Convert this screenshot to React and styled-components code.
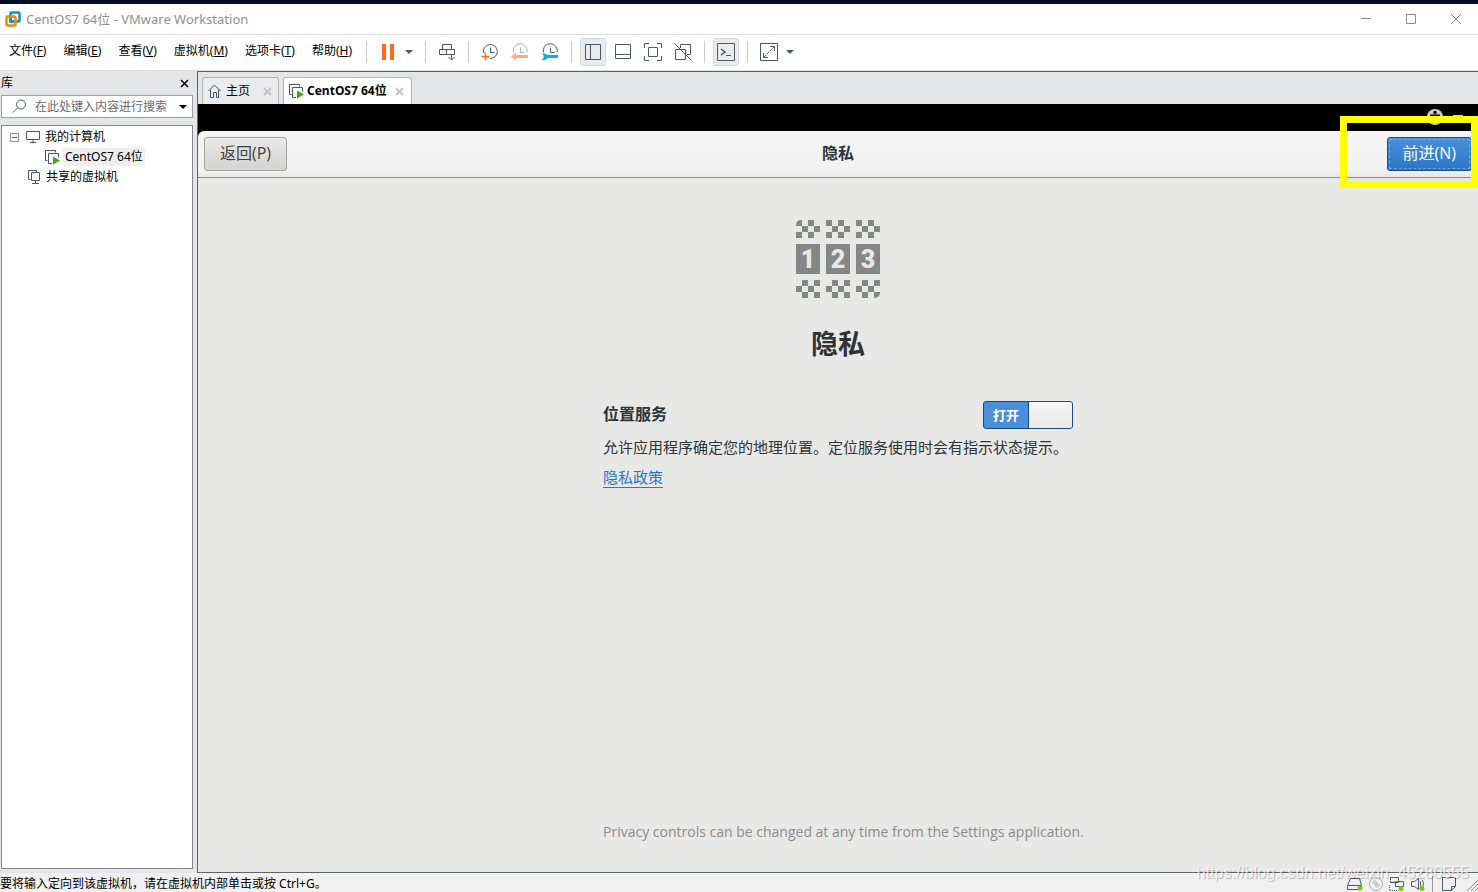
import React from 'react';
import styled, { createGlobalStyle, css } from 'styled-components';

const hostFont = '"Noto Sans", "Noto Sans CJK SC", sans-serif';
const guestFont = '"Open Sans", "Noto Sans CJK SC", sans-serif';
const ink = '#455b6b';

const GlobalStyle = createGlobalStyle`
  *, *::before, *::after { box-sizing: border-box; }
  body { margin: 0; background: #f0f0f0; font: 12px/16px ${hostFont}; color: #000; }
  button, input { font: inherit; color: inherit; }
  button { border: 0; background: none; padding: 0; white-space: nowrap; }
  svg { display: block; flex: none; }
`;

const Window = styled.div`
  display: flex;
  flex-direction: column;
  min-height: 100vh;
`;

const DesktopStrip = styled.div`
  height: 4px;
  background: #030b26;
`;

const TitleBar = styled.header`
  display: flex;
  align-items: center;
  height: 31px;
  padding-left: 5px;
  gap: 5px;
  background: #fff;
  border-bottom: 1px solid #dedede;
  color: #909090;
`;

const WindowTitle = styled.h1`
  flex: 1;
  margin: 0;
  font-size: 13px;
  font-weight: 400;
`;

const CaptionButtons = styled.div`
  display: flex;
`;

const CaptionButton = styled.button`
  display: grid;
  place-items: center;
  width: 45px;
  height: 30px;
`;

const CommandBar = styled.div`
  display: flex;
  align-items: center;
  height: 36px;
  padding-bottom: 1px;
  background: #fff;
  border-bottom: 1px solid #e0e0e0;
`;

const Menu = styled.nav`
  display: flex;
  gap: 1px;
  min-width: 366px;
  padding: 0 0 2px 1px;
`;

const MenuItem = styled.button`
  padding: 0 8px;
  line-height: 20px;
`;

const ToolGroup = styled.div`
  display: flex;
  gap: ${(p) => (p.$joined ? '0' : '4px')};
  padding: 0 8px;
  border-left: 1px solid #c8cacc;
  height: 22px;
  align-items: center;
`;

const ToolButton = styled.button`
  display: grid;
  place-items: center;
  width: ${(p) => (p.$narrow ? '16px' : '26px')};
  height: 28px;
  border-radius: 3px;
  ${(p) =>
    p.$pressed &&
    css`
      background: #e9ebec;
      border: 1px solid #d3d6d8;
    `}
`;

const Workspace = styled.div`
  flex: 1;
  display: flex;
  background: #e3e5e7;
`;

const Sidebar = styled.aside`
  display: flex;
  flex-direction: column;
  width: 197px;
  padding: 0 4px 4px 1px;
`;

const SidebarHead = styled.div`
  display: flex;
  align-items: center;
  justify-content: space-between;
  height: 24px;
  padding-right: 4px;
`;

const SearchBox = styled.label`
  display: flex;
  align-items: center;
  height: 23px;
  padding: 0 5px 0 10px;
  gap: 8px;
  background: #fff;
  border: 1px solid #9a9fa5;
`;

const SearchInput = styled.input`
  flex: 1;
  min-width: 0;
  padding: 0;
  border: 0;
  outline: 0;
  background: none;
  &::placeholder { color: #6a6a6a; opacity: 1; }
`;

const Tree = styled.ul`
  flex: 1;
  margin: 7px 0 0;
  padding: 1px 0 0;
  list-style: none;
  background: #fff;
  border: 1px solid #828790;
`;

const TreeRow = styled.li`
  display: flex;
  align-items: center;
  height: 20px;
  gap: 3px;
  padding-left: ${(p) => p.$indent};
`;

const TreeLabel = styled.span`
  padding: 1px 2px;
  background: ${(p) => (p.$selected ? '#efefef' : 'transparent')};
`;

const Expander = styled.button`
  display: grid;
  place-items: center;
  width: 9px;
  height: 9px;
  margin-right: 4px;
  border: 1px solid #919191;
  background: #f6f6f6;
`;

const Main = styled.main`
  flex: 1;
  display: flex;
  flex-direction: column;
  min-width: 0;
  border: solid #5f6467;
  border-width: 1px 0 1px 1px;
`;

const Tabs = styled.div`
  display: flex;
  align-items: flex-end;
  height: 32px;
  padding-left: 4px;
  gap: 4px;
`;

const Tab = styled.div`
  display: flex;
  align-items: center;
  min-width: 77px;
  height: 27px;
  padding: 0 6px 0 5px;
  gap: 3px;
  border: 1px solid #b4b6b8;
  border-bottom: 0;
  border-radius: 3px 3px 0 0;
  background: ${(p) => (p.$active ? '#fff' : '#e9ebec')};
  font-weight: ${(p) => (p.$active ? 700 : 400)};
`;

const TabLabel = styled.span`
  margin-right: 5px;
`;

const TabClose = styled.button`
  display: grid;
  place-items: center;
  width: 10px;
  height: 16px;
  margin-left: auto;
`;

const Guest = styled.section`
  position: relative;
  flex: 1;
  display: flex;
  flex-direction: column;
  background: #000;
  color: #2e3436;
  font: 15px/20px ${guestFont};
`;

const GuestPanel = styled.div`
  display: flex;
  justify-content: flex-end;
  gap: 10px;
  height: 27px;
  padding: 5px 15px 0 0;
`;

const GuestHeader = styled.header`
  display: grid;
  grid-template-columns: 1fr auto 1fr;
  align-items: center;
  height: 47px;
  padding: 0 6px;
  background: linear-gradient(#f5f5f5, #f2f2f2 85%, #e6e6e6);
  border-bottom: 1px solid #8f918e;
  border-radius: 6px 6px 0 0;
`;

const GuestTitle = styled.h2`
  margin: 0;
  padding-bottom: 2px;
  font-size: 16px;
  font-weight: 700;
`;

const GuestButton = styled.button`
  justify-self: ${(p) => (p.$primary ? 'end' : 'start')};
  height: 34px;
  padding: 0 15px 2px;
  font-size: 16px;
  border: 1px solid ${(p) => (p.$primary ? '#1b4f8c' : '#a3a5a1')};
  border-radius: 3px;
  background: ${(p) =>
    p.$primary ? 'linear-gradient(#4a90d9, #2a76c6)' : 'linear-gradient(#e9e9e8, #d3d3d1)'};
  color: ${(p) => (p.$primary ? '#fff' : '#3c4143')};
  ${(p) =>
    p.$primary &&
    css`
      outline: 1px dashed #6ea4dd;
      outline-offset: -3px;
    `}
`;

const GuestBody = styled.div`
  flex: 1;
  display: flex;
  flex-direction: column;
  align-items: center;
  padding: 42px 24px 30px;
  background: #e8e8e6;
`;

const PageHeading = styled.h3`
  margin: 27px 0 38px;
  font-size: 27px;
  line-height: 38px;
  font-weight: 700;
`;

const Settings = styled.div`
  flex: 1;
  display: flex;
  flex-direction: column;
  align-items: flex-start;
  width: 100%;
  max-width: 470px;
`;

const SettingRow = styled.div`
  display: flex;
  align-items: center;
  justify-content: space-between;
  width: 100%;
  height: 28px;
  margin-bottom: 8px;
`;

const SettingLabel = styled.label`
  padding-bottom: 2px;
  font-size: 16px;
  font-weight: 700;
`;

const SwitchTrack = styled.label`
  position: relative;
  display: grid;
  grid-template-columns: 1fr 1fr;
  width: 90px;
  height: 28px;
  border: 1px solid #1c4a7e;
  border-radius: 3px;
  background: #4a90d9;
  color: #fff;
  font-size: 13px;
  line-height: 26px;
  font-weight: 700;
  text-align: center;
  overflow: hidden;
`;

const SwitchInput = styled.input`
  position: absolute;
  inset: 0;
  margin: 0;
  opacity: 0;
`;

const SwitchKnob = styled.span`
  background: linear-gradient(#f6f6f6, #e9e9e8);
  border-left: 1px solid #1c4a7e;
`;

const Description = styled.p`
  margin: 0 0 10px;
  white-space: nowrap;
`;

const PolicyLink = styled.a`
  color: #2a76c6;
  text-decoration: none;
  border-bottom: 1px solid #2a76c6;
`;

const Footnote = styled.p`
  margin: auto 0 0;
  font-size: 14px;
  color: #8b8d8c;
  white-space: nowrap;
`;

const Highlight = styled.div`
  position: absolute;
  top: 12px;
  right: 0;
  width: 138px;
  height: 72px;
  border: 7px solid #ff0;
  pointer-events: none;
`;

const StatusBar = styled.footer`
  position: relative;
  display: flex;
  align-items: center;
  height: 19px;
  background: #f0f0f0;
  padding-top: 3px;
`;

const StatusText = styled.span`
  flex: 1;
  white-space: nowrap;
`;

const StatusIcons = styled.div`
  display: flex;
  align-items: center;
  gap: 6px;
`;

const StatusDivider = styled.span`
  width: 1px;
  height: 16px;
  background: #9a9a9a;
`;

const Watermark = styled.span`
  position: absolute;
  right: 9px;
  top: -10px;
  font: 16px/20px "Liberation Sans", sans-serif;
  color: rgba(255, 255, 255, 0.7);
  text-shadow: 1px 1px 1px rgba(0, 0, 0, 0.25);
  pointer-events: none;
`;

function Svg({ w = 18, h = 18, children, stroke = ink, ...rest }) {
  return (
    <svg width={w} height={h} viewBox={`0 0 ${w} ${h}`} fill="none" stroke={stroke} aria-hidden="true" {...rest}>
      {children}
    </svg>
  );
}

const Logo = () => (
  <Svg w={16} h={16}>
    <rect x="5.500" y="1.500" width="9" height="9" rx="1" stroke="#0b91d0" strokeWidth="2.500" />
    <rect x="1.500" y="5.500" width="9" height="9" rx="1" stroke="#f38b00" strokeWidth="2.500" />
    <path d="M5.500 7v3.500H9" stroke="#0b91d0" strokeWidth="2.500" />
  </Svg>
);

const Caret = ({ color = ink }) => (
  <Svg w={8} h={4} stroke="none"><path d="M0 0h8L4 4z" fill={color} /></Svg>
);

const Clock = ({ stroke = ink, d }) => (
  <>
    <path d={d} stroke={stroke} />
    <path d="M9.500 4.500v5h4" stroke={stroke} />
  </>
);

const VmIcon = () => (
  <Svg w={15} h={15}>
    <path d="M2.500 10.500h-2v-10h10v2" />
    <path d="M7 13.500H3.500v-10h10v4" />
    <path d="M8 6.500l7 4-7 4z" fill="#48a21a" stroke="none" />
  </Svg>
);

const Cross = ({ size, color, width = 1 }) => (
  <Svg w={size} h={size} stroke={color}>
    <path d={`M1 1L${size - 1} ${size - 1}M${size - 1} 1L1 ${size - 1}`} strokeWidth={width} />
  </Svg>
);

function PrivacyArt() {
  const cells = [];
  [0, 30, 60].forEach((x) => {
    [0, 1, 2].forEach((r) => {
      [0, 2].forEach((c) => {
        const top = c + (r % 2);
        const bottom = c + ((r + 1) % 2);
        cells.push(
          <rect key={`t${x}${r}${c}`} x={x + top * 6} y={r * 6} width="6" height="6" />,
          <rect key={`b${x}${r}${c}`} x={x + bottom * 6} y={60 + r * 6} width="6" height="6" />
        );
      });
    });
  });
  return (
    <svg width="84" height="78" viewBox="0 0 84 78" fill="#858786" role="img" aria-label="隐私">
      <clipPath id="corners"><rect width="84" height="78" rx="5" /></clipPath>
      <g clipPath="url(#corners)">
        {cells}
        {[1, 2, 3].map((n, i) => (
          <g key={n}>
            <rect x={i * 30} y="24" width="24" height="30" />
            <text x={i * 30 + 12} y="48" textAnchor="middle" fill="#e8e8e6" fontFamily="Roboto, sans-serif" fontWeight="900" fontSize="25">{n}</text>
          </g>
        ))}
      </g>
    </svg>
  );
}

const menus = [
  ['文件', 'F'],
  ['编辑', 'E'],
  ['查看', 'V'],
  ['虚拟机', 'M'],
  ['选项卡', 'T'],
  ['帮助', 'H'],
];

export default function App() {
  return (
    <>
      <GlobalStyle />
      <Window>
        <DesktopStrip />
        <TitleBar>
          <Logo />
          <WindowTitle>CentOS7 64位 - VMware Workstation</WindowTitle>
          <CaptionButtons>
            <CaptionButton aria-label="最小化"><Svg w={10} h={10} stroke="#8c8c8c"><path d="M0 4.500h10" /></Svg></CaptionButton>
            <CaptionButton aria-label="最大化"><Svg w={10} h={10} stroke="#8c8c8c"><path d="M.5.5h9v9h-9z" /></Svg></CaptionButton>
            <CaptionButton aria-label="关闭"><Cross size={12} color="#8c8c8c" /></CaptionButton>
          </CaptionButtons>
        </TitleBar>

        <CommandBar>
          <Menu>
            {menus.map(([name, key]) => (
              <MenuItem key={key}>{name}(<u>{key}</u>)</MenuItem>
            ))}
          </Menu>
          <ToolGroup $joined>
            <ToolButton aria-label="挂起"><Svg stroke="none"><path d="M3 1h4v16H3zM11 1h4v16h-4z" fill="#ff6a1c" /></Svg></ToolButton>
            <ToolButton $narrow aria-label="电源选项"><Caret /></ToolButton>
          </ToolGroup>
          <ToolGroup>
            <ToolButton aria-label="发送 Ctrl+Alt+Del">
              <Svg>
                <path d="M4.500 1.500h9v5h-9zM1.500 6.500h7v5h-7zM8.500 6.500h8v5h-8zM13.500 11v6M10.500 14l3 3 3-3" />
              </Svg>
            </ToolButton>
          </ToolGroup>
          <ToolGroup>
            <ToolButton aria-label="拍摄快照">
              <Svg><Clock d="M2.500 10A7 7 0 1 1 9 15.500" /><path d="M4.500 9.500v8M.5 13.500h8" stroke="#ff6a1c" strokeWidth="1.500" /></Svg>
            </ToolButton>
            <ToolButton aria-label="恢复快照">
              <Svg><Clock stroke="#a9b3bb" d="M2.500 9.500A7 7 0 1 1 16 9.500" /><path d="M0 13.500l5-4v2.500h12v3H5v2.500z" fill="#ffab88" stroke="none" /></Svg>
            </ToolButton>
            <ToolButton aria-label="管理快照">
              <Svg><Clock d="M2.500 9.500A7 7 0 1 1 16 9.500" /><path d="M.5 10.500h3a3 3 0 0 1 2.800 1.500H17v3H6.300A3 3 0 0 1 3.500 17h-3l2-2v-3z" fill="#0bb3d3" stroke="none" /></Svg>
            </ToolButton>
          </ToolGroup>
          <ToolGroup>
            <ToolButton $pressed aria-label="库"><Svg><path d="M1.500 1.500h15v15h-15zM6.500 1.500v15" /></Svg></ToolButton>
            <ToolButton aria-label="缩略图栏"><Svg><path d="M1.500 1.500h15v14h-15zM1.500 11.500h15" /></Svg></ToolButton>
            <ToolButton aria-label="全屏"><Svg><path d="M.5 5V.5H5M13 .5h4.500V5M17.500 13v4.500H13M5 17.500H.5V13M4.500 4.500h9v9h-9z" /></Svg></ToolButton>
            <ToolButton aria-label="Unity"><Svg><path d="M6.500 5V1.500h10v10H13M1.500 6.500h10v10h-10zM.5.5l17 17" /></Svg></ToolButton>
          </ToolGroup>
          <ToolGroup>
            <ToolButton $pressed aria-label="控制台"><Svg><path d="M.5.5h17v17H.5z" /><path d="M4 6l4 3-4 3" strokeWidth="1.500" /><path d="M9 12.500h5" /></Svg></ToolButton>
          </ToolGroup>
          <ToolGroup $joined>
            <ToolButton aria-label="拉伸"><Svg><path d="M.5.5h17v17H.5zM10 3.500h4.500V8M3.500 10v4.500H8" /><path d="M4 14L14 4" strokeDasharray="3 1" /></Svg></ToolButton>
            <ToolButton $narrow aria-label="拉伸选项"><Caret /></ToolButton>
          </ToolGroup>
        </CommandBar>

        <Workspace>
          <Sidebar>
            <SidebarHead>
              库
              <button aria-label="关闭库"><Cross size={9} color="#000" width={1.5} /></button>
            </SidebarHead>
            <SearchBox>
              <Svg w={15} h={15}><circle cx="9" cy="5.500" r="4.500" /><path d="M5.500 9L1 13.500" /></Svg>
              <SearchInput aria-label="搜索" placeholder="在此处键入内容进行搜索" />
              <Caret color="#000" />
            </SearchBox>
            <Tree>
              <TreeRow $indent="8px">
                <Expander aria-label="折叠"><Svg w={5} h={1} stroke="none"><path d="M0 0h5v1H0z" fill="#3b5fa8" /></Svg></Expander>
                <Svg w={14} h={12}><path d="M.5.5h13v8H.5zM7 9v2.500M4 11.500h6" /></Svg>
                <TreeLabel>我的计算机</TreeLabel>
              </TreeRow>
              <TreeRow $indent="43px">
                <VmIcon />
                <TreeLabel $selected>CentOS7 64位</TreeLabel>
              </TreeRow>
              <TreeRow $indent="26px">
                <Svg w={13} h={14}><path d="M2.500 9.500h-2v-9h8v2M3.500 2.500h8v8h-8zM7.500 11v2.500M4 13.500h7" /></Svg>
                <TreeLabel>共享的虚拟机</TreeLabel>
              </TreeRow>
            </Tree>
          </Sidebar>

          <Main>
            <Tabs>
              <Tab>
                <Svg w={15} h={14}><path d="M.5 7l6-6 6 6M2.500 5.500v8h3v-5h3v5h2v-8" /></Svg>
                <TabLabel>主页</TabLabel>
                <TabClose aria-label="关闭主页"><Cross size={9} color="#c2c4c5" width={2} /></TabClose>
              </Tab>
              <Tab $active>
                <VmIcon />
                <TabLabel>CentOS7 64位</TabLabel>
                <TabClose aria-label="关闭 CentOS7"><Cross size={9} color="#c2c4c5" width={2} /></TabClose>
              </Tab>
            </Tabs>
            <Guest>
              <GuestPanel>
                <Svg w={16} h={16} stroke="none">
                  <circle cx="8" cy="8" r="8" fill="#ccc" />
                  <circle cx="8" cy="3.500" r="1.700" fill="#000" />
                  <path d="M3 5.500h10v2H9.500v5h-3v-5H3z" fill="#000" />
                </Svg>
                <Svg w={10} h={16} stroke="none"><path d="M0 6h10v1H0z" fill="#ccc" /></Svg>
              </GuestPanel>
              <GuestHeader>
                <GuestButton>返回(P)</GuestButton>
                <GuestTitle>隐私</GuestTitle>
                <GuestButton $primary>前进(N)</GuestButton>
              </GuestHeader>
              <GuestBody>
                <PrivacyArt />
                <PageHeading>隐私</PageHeading>
                <Settings>
                  <SettingRow>
                    <SettingLabel htmlFor="location">位置服务</SettingLabel>
                    <SwitchTrack>
                      <SwitchInput id="location" type="checkbox" defaultChecked />
                      <span>打开</span>
                      <SwitchKnob />
                    </SwitchTrack>
                  </SettingRow>
                  <Description>允许应用程序确定您的地理位置。定位服务使用时会有指示状态提示。</Description>
                  <PolicyLink href="#policy">隐私政策</PolicyLink>
                  <Footnote>Privacy controls can be changed at any time from the Settings application.</Footnote>
                </Settings>
              </GuestBody>
              <Highlight />
            </Guest>
          </Main>
        </Workspace>

        <StatusBar>
          <StatusText>要将输入定向到该虚拟机，请在虚拟机内部单击或按 Ctrl+G。</StatusText>
          <StatusIcons>
            <Svg w={16} h={14}><path d="M3.500 1.500h9l2 7v4h-14v-4zM.5 8.500h14" /><circle cx="13" cy="11" r="2.500" fill="#76c815" stroke="none" /></Svg>
            <Svg w={14} h={14} stroke="#a3abb1"><circle cx="7" cy="7" r="6.500" /><circle cx="7" cy="7" r="1.500" /><path d="M3.500 6.500a4 4 0 0 1 3-3M10.500 7.500a4 4 0 0 1-3 3" /></Svg>
            <Svg w={16} h={14}><path d="M1.500.5h8v5h-8zM6.500 4.500h8v5h-8z" fill="#f0f0f0" /><path d="M.5 8v5.500H9" strokeDasharray="1 1" /><circle cx="12" cy="11.500" r="2.500" fill="#76c815" stroke="none" /></Svg>
            <Svg w={15} h={14}><path d="M.5 4.500h3l4-3v11l-4-3h-3zM9.500 4.500v5M11.500 3q2 4 0 7" /><circle cx="11" cy="11.500" r="2.500" fill="#76c815" stroke="none" /></Svg>
            <StatusDivider />
            <Svg w={22} h={14}><path d="M3.500.5h13v9l-4 4h-9zM12.500 13v-3.500h4" /></Svg>
            <Svg w={11} h={14} stroke="#8a8a8a"><path d="M0 14L11 3M4 14l7-7M8 14l3-3" /></Svg>
          </StatusIcons>
          <Watermark>https://blog.csdn.net/weixin_45280555</Watermark>
        </StatusBar>
      </Window>
    </>
  );
}
